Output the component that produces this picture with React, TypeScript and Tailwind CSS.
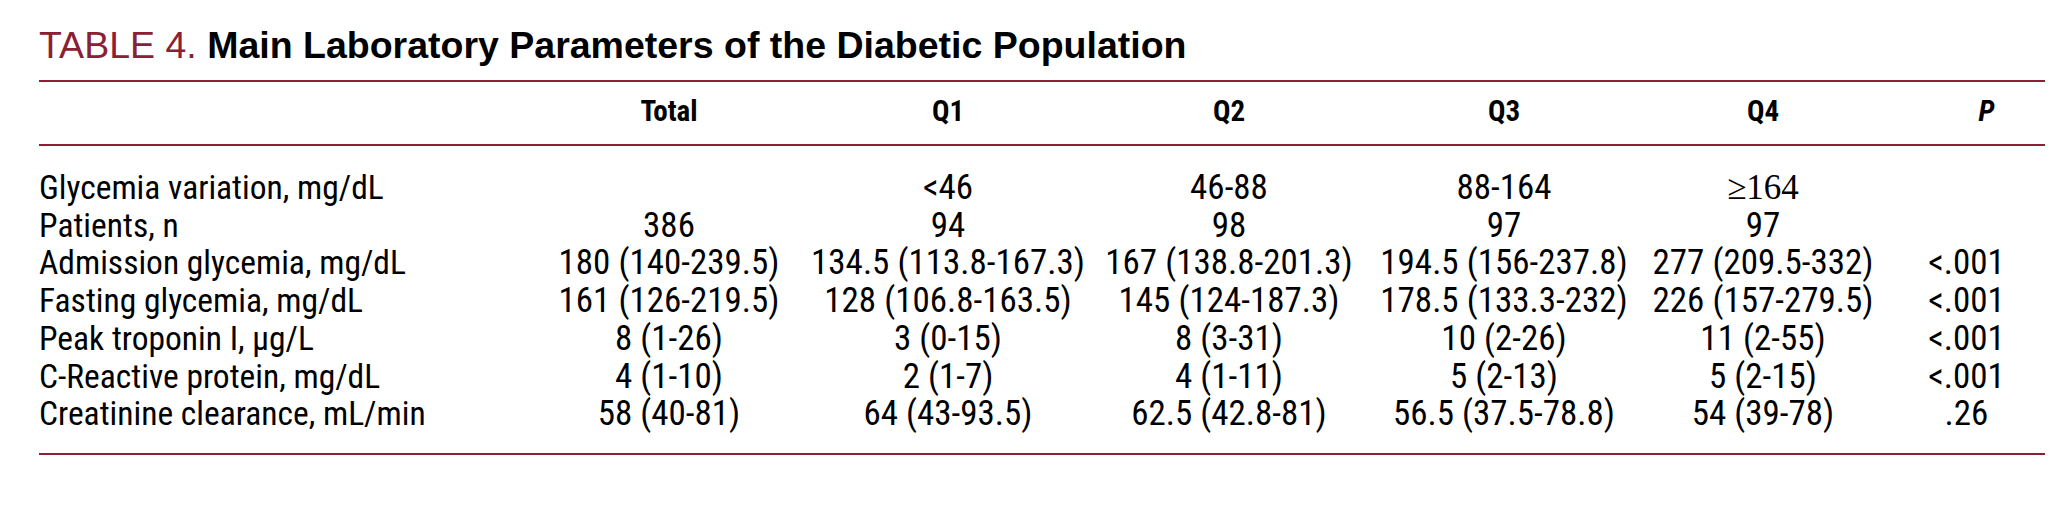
const rows: { label: string; values: string[] }[] = [
  { label: 'Glycemia variation, mg/dL', values: ['', '<46', '46-88', '88-164', '≥164', ''] },
  { label: 'Patients, n', values: ['386', '94', '98', '97', '97', ''] },
  {
    label: 'Admission glycemia, mg/dL',
    values: ['180 (140-239.5)', '134.5 (113.8-167.3)', '167 (138.8-201.3)', '194.5 (156-237.8)', '277 (209.5-332)', '<.001'],
  },
  {
    label: 'Fasting glycemia, mg/dL',
    values: ['161 (126-219.5)', '128 (106.8-163.5)', '145 (124-187.3)', '178.5 (133.3-232)', '226 (157-279.5)', '<.001'],
  },
  { label: 'Peak troponin I, µg/L', values: ['8 (1-26)', '3 (0-15)', '8 (3-31)', '10 (2-26)', '11 (2-55)', '<.001'] },
  { label: 'C-Reactive protein, mg/dL', values: ['4 (1-10)', '2 (1-7)', '4 (1-11)', '5 (2-13)', '5 (2-15)', '<.001'] },
  {
    label: 'Creatinine clearance, mL/min',
    values: ['58 (40-81)', '64 (43-93.5)', '62.5 (42.8-81)', '56.5 (37.5-78.8)', '54 (39-78)', '.26'],
  },
];

const grid = 'grid grid-cols-[491px_278px_280px_282px_268px_250px_157px]';

export default function App() {
  return (
    <div className="w-[2062px] h-[512px] bg-white pl-[39px] pr-[17px] text-black">
      {/* titre */}
      <div className="pt-[25px] text-[37.5px] leading-[41px] font-['Liberation_Sans',Arial,sans-serif] whitespace-nowrap">
        <span className="text-[#8b2035]">TABLE 4. </span>
        <span className="font-bold">Main Laboratory Parameters of the Diabetic Population</span>
      </div>

      <div className="mt-[14px] h-[2px] bg-[#8b2035]" />

      <div
        className={`${grid} pt-[15px] pb-[19px] text-[29px] leading-[28px] font-bold font-['Roboto_Condensed',sans-serif]`}
      >
        <div />
        <div className="text-center">Total</div>
        <div className="text-center">Q1</div>
        <div className="text-center">Q2</div>
        <div className="text-center">Q3</div>
        <div className="text-center">Q4</div>
        <div className="text-center italic pl-[40px]">P</div>
      </div>

      <div className="h-[2px] bg-[#8b2035]" />

      <div className="pt-[23px] pb-[20px] text-[35px] leading-[37.7px] font-['Roboto_Condensed',sans-serif]">
        {rows.map((row) => (
          <div key={row.label} className={grid}>
            <div className="whitespace-nowrap text-[33.5px]">{row.label}</div>
            {row.values.map((v, i) => (
              <div
                key={i}
                className={
                  v.startsWith('≥')
                    ? "text-center whitespace-nowrap font-['Liberation_Serif',serif]"
                    : 'text-center whitespace-nowrap'
                }
              >
                {v}
              </div>
            ))}
          </div>
        ))}
      </div>

      <div className="h-[2px] bg-[#8b2035]" />
    </div>
  );
}
